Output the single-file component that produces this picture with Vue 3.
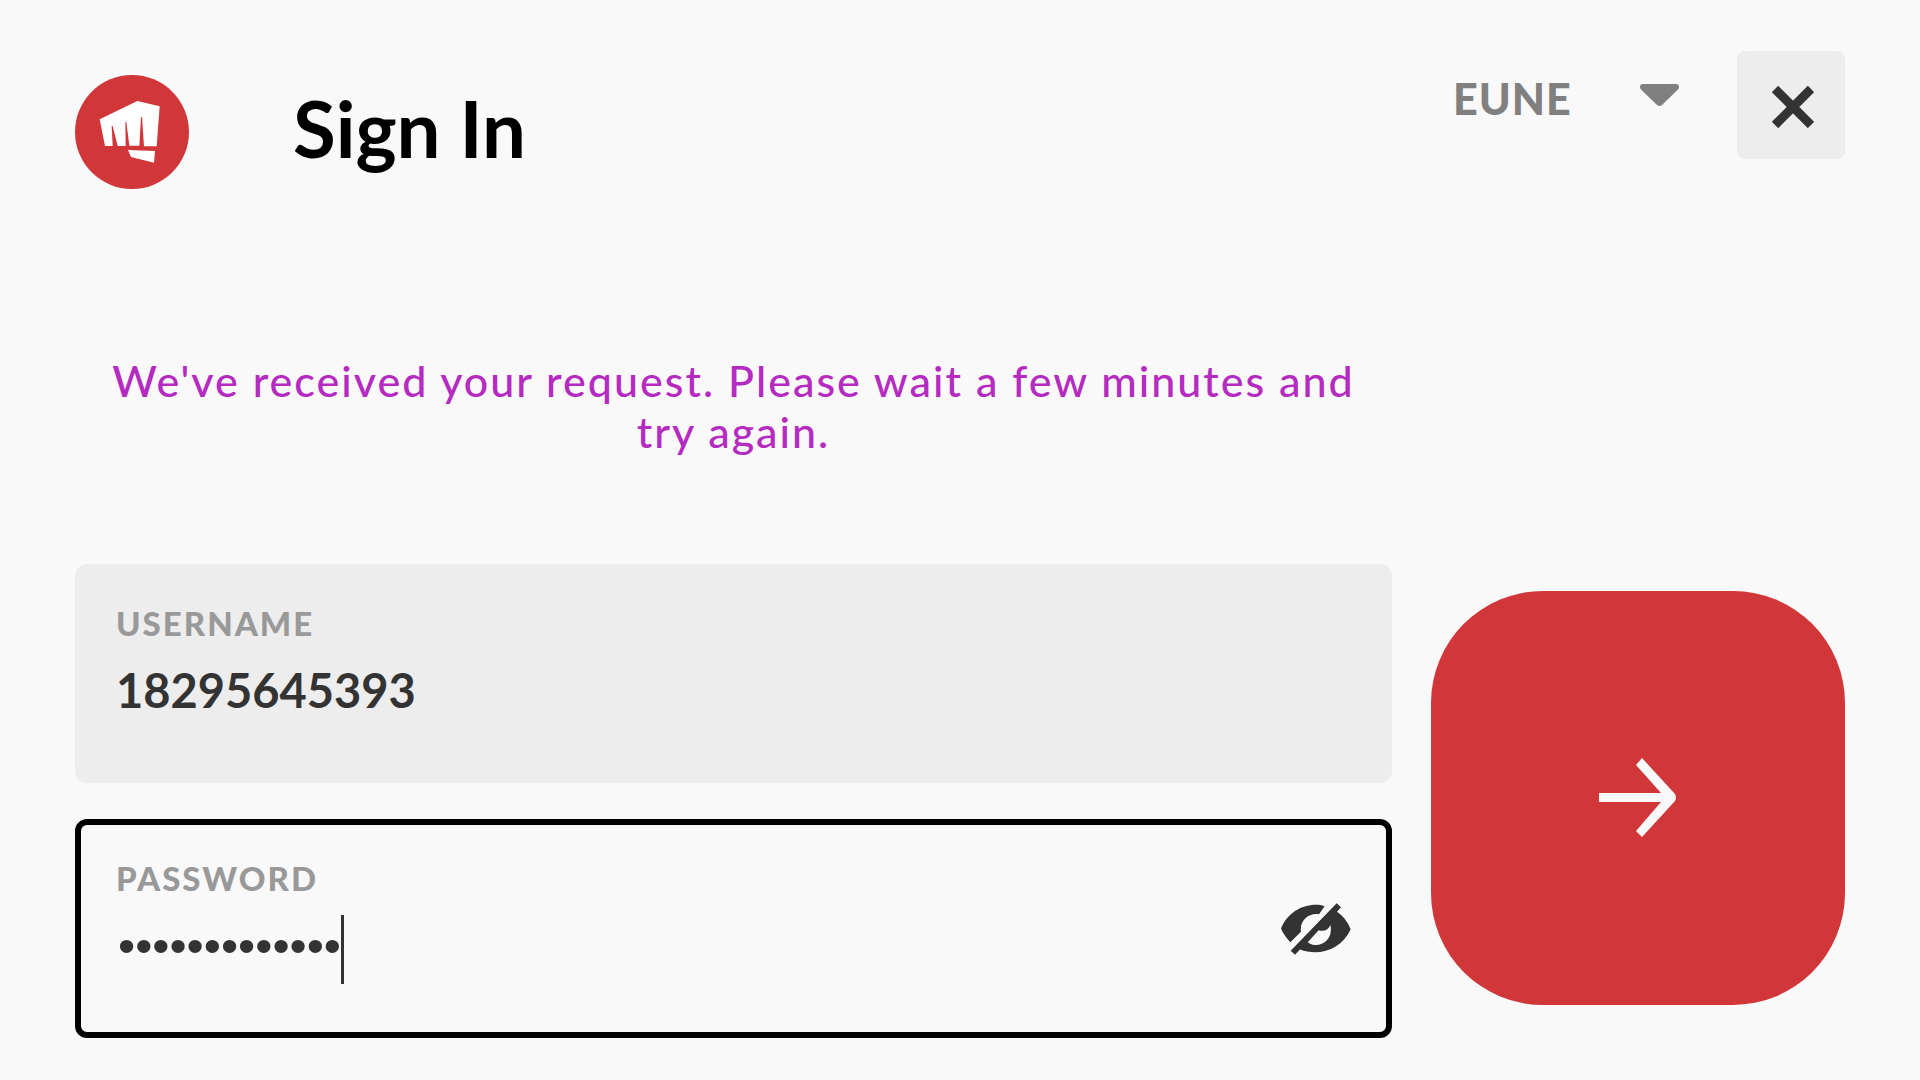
<script setup>
import { ref } from 'vue'

const region = ref('EUNE')
const username = ref('18295645393')
const password = ref('passphrase123')
const revealed = ref(false)
</script>

<template>
  <main class="page">
    <header class="header">
      <div class="brand">
        <svg class="logo" viewBox="45 45 342 342" aria-hidden="true">
          <circle cx="216" cy="216" r="171" fill="#d13639" />
          <path
            fill="#fff"
            d="M119 178 232 123 299 139 290 259H252L246 171H243L238 257H208L199 186H196L197 258H173L158 198H155L158 258H135ZM204 270 285 273 282 308 213 291Z"
          />
        </svg>
        <h1 class="title">Sign In</h1>
      </div>
      <div class="tools">
        <div class="region">
          <select v-model="region" class="region-select" aria-label="Region">
            <option>EUNE</option>
          </select>
          <svg class="region-arrow" viewBox="0 0 39 28" aria-hidden="true">
            <path
              fill="#808080"
              d="M3 0H36Q39 0 39 3Q39 4 38 5.500L22 21Q19.500 23 17 21L1 5.500Q0 4 0 3Q0 0 3 0Z"
            />
          </svg>
        </div>
        <button class="close" type="button" aria-label="Close">
          <svg viewBox="-3 -3 45 45" width="45" height="45" aria-hidden="true">
            <path d="M3 3 39 39M39 3 3 39" stroke="#333" stroke-width="9" fill="none" />
          </svg>
        </button>
      </div>
    </header>

    <form class="form" @submit.prevent>
      <div class="fields">
        <p class="message" role="status">
          We've received your request. Please wait a few minutes and try again.
        </p>
        <div class="field">
          <div class="field-body">
            <label class="label" for="username">USERNAME</label>
            <div class="value">
              <input id="username" v-model="username" class="input input-full" type="text" />
            </div>
          </div>
        </div>
        <div class="field field-active">
          <div class="field-body">
            <label class="label" for="password">PASSWORD</label>
            <div class="value">
              <input
                id="password"
                v-model="password"
                class="input input-secret"
                :type="revealed ? 'text' : 'password'"
              />
              <span class="caret"></span>
            </div>
          </div>
          <button
            class="reveal"
            type="button"
            aria-label="Show password"
            @click="revealed = !revealed"
          >
            <svg viewBox="123 370 210 155" width="70" height="52" aria-hidden="true">
              <path
                fill="#333"
                fill-rule="evenodd"
                d="M254 379C245 376 237 375 228 375C182 375 141 402 123 446Q131 466 151 487L183 456C178 425 202 399 237 403ZM290 370 303 382 291 396Q318 414 332 448C304 510 238 530 180 509L165 525 152 513ZM203 487C235 510 282 484 271 435Q269 443 262 448Q250 456 236 451Z"
              />
            </svg>
          </button>
        </div>
      </div>
      <button class="submit" type="submit" aria-label="Sign in">
        <svg viewBox="0 0 78 80" width="78" height="80" aria-hidden="true">
          <path
            fill="#f9f9f9"
            d="M0 35H62L37 7 43 0 76 36Q78 39.500 76 43L43 79 37 73 62 44H0Z"
          />
        </svg>
      </button>
    </form>
  </main>
</template>

<style>
body {
  margin: 0;
  background: #f9f9f9;
}
</style>

<style scoped>
.page {
  box-sizing: border-box;
  min-height: 100vh;
  padding: 51px 75px 42px;
  font-family: Lato, 'Open Sans', sans-serif;
  background: #f9f9f9;
}

button,
input,
select {
  margin: 0;
  padding: 0;
  border: 0;
  outline: 0;
  background: none;
  font-family: inherit;
}

button {
  display: flex;
  align-items: center;
  justify-content: center;
  flex: none;
  cursor: pointer;
}

.header {
  display: flex;
  align-items: flex-start;
  justify-content: space-between;
  margin-bottom: 166px;
}

.brand {
  display: flex;
  align-items: center;
  gap: 104px;
  padding-top: 24px;
}

.logo {
  display: block;
  width: 114px;
  height: 114px;
}

.title {
  margin: 0;
  padding-bottom: 8px;
  font-size: 78px;
  line-height: 90px;
  font-weight: 700;
  color: #000;
}

.tools {
  display: flex;
  align-items: flex-start;
  gap: 58px;
}

.region {
  display: grid;
  align-items: center;
  padding-top: 20px;
}

.region-select {
  grid-area: 1 / 1;
  width: 226px;
  height: 54px;
  appearance: none;
  font-size: 43px;
  font-weight: 900;
  letter-spacing: 1px;
  color: #808080;
}

.region-arrow {
  grid-area: 1 / 1;
  justify-self: end;
  width: 39px;
  height: 28px;
  pointer-events: none;
}

.close {
  width: 108px;
  height: 108px;
  border-radius: 8px;
  background: #ededed;
}

.form {
  display: flex;
  align-items: flex-end;
  gap: 39px;
}

.fields {
  flex: 1;
  min-width: 0;
  display: flex;
  flex-direction: column;
  gap: 36px;
}

.message {
  margin: 0 0 71px;
  padding: 0 24px;
  font-size: 43px;
  line-height: 51px;
  font-weight: 500;
  letter-spacing: 2px;
  text-align: center;
  color: #b52bc1;
}

.field {
  box-sizing: border-box;
  min-height: 219px;
  display: flex;
  align-items: center;
  padding: 35px 35px 48px;
  border: 6px solid #ededed;
  border-radius: 12px;
  background: #ededed;
}

.field-active {
  padding-bottom: 35px;
  border-color: #000;
  background: #f9f9f9;
}

.field-body {
  flex: 1;
  min-width: 0;
  align-self: flex-start;
}

.label {
  display: block;
  margin-bottom: 10px;
  font-size: 33px;
  line-height: 36px;
  font-weight: 900;
  letter-spacing: 2px;
  color: #999;
}

.value {
  display: flex;
  align-items: center;
  height: 78px;
}

.input {
  height: 78px;
  font-size: 47px;
  font-weight: 700;
  color: #333;
}

.input-full {
  width: 100%;
}

.input-secret {
  field-sizing: content;
  padding-left: 2px;
  font-family: 'Liberation Sans', Arial, sans-serif;
  font-size: 49px;
  font-weight: 400;
  caret-color: transparent;
}

.caret {
  align-self: flex-end;
  width: 3px;
  height: 69px;
  background: #333;
}

.submit {
  width: 414px;
  height: 414px;
  margin-bottom: 33px;
  border-radius: 112px;
  background: #d13639;
}
</style>
